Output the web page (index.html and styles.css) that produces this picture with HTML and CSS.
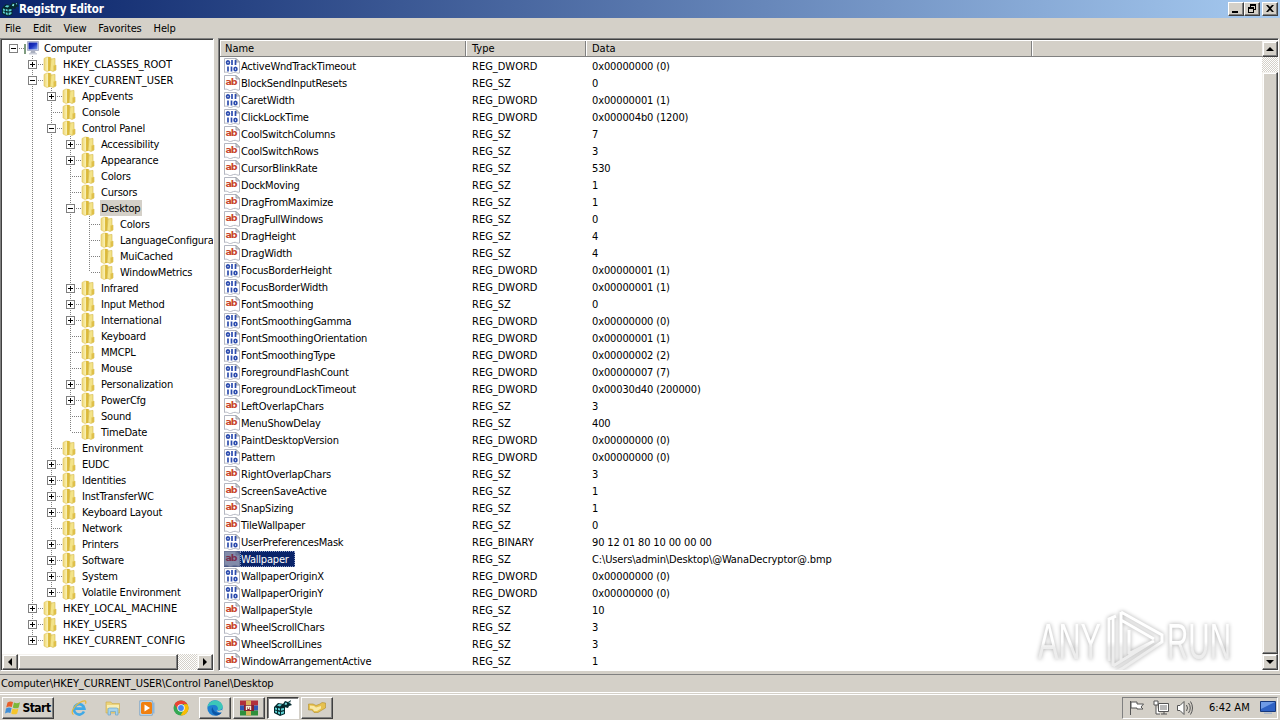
FILE: index.html
```
<!DOCTYPE html>
<html lang="en">

<head>
    <meta charset="UTF-8">
    <meta name="viewport" content="width=device-width, initial-scale=1.0">
    <title>Registry Editor</title>
    <link rel="stylesheet" href="styles.css">
</head>

<body>
    <svg class="defs" width="0" height="0">
        <defs>
            <linearGradient id="gold" x1="0" x2="1">
                <stop offset="0" stop-color="#ecd676" />
                <stop offset=".5" stop-color="#f9efb0" />
                <stop offset="1" stop-color="#dcb93c" />
            </linearGradient>
            <linearGradient id="screen" x1="0" x2="1" y2="1">
                <stop offset="0" stop-color="#0818a0" />
                <stop offset=".5" stop-color="#1c34c0" />
                <stop offset="1" stop-color="#7aa0f0" />
            </linearGradient>
            <linearGradient id="fade" x2="0" y2="1">
                <stop offset=".5" stop-color="#fff" />
                <stop offset=".6" stop-color="#ededed" />
            </linearGradient>
        </defs>
        <symbol id="i-folder" viewBox="0 0 16 16">
            <path fill="url(#gold)" stroke="#e0c558" stroke-width=".6" d="M2 2.500 5 1l4 .6V14l-4 1.500L2 14z" />
            <path fill="#d9b632" d="M6 1h2v14H6z" opacity=".85" />
            <path fill="#f3e389" stroke="#d4b748" stroke-width=".6" d="m9 3 4-.6v6l1 1V14l-3 1.500L8 14z" />
            <path fill="#dfc04a" d="M11.500 9.500 14 9v5l-2.500 1z" />
        </symbol>
        <symbol id="i-computer" viewBox="0 0 16 16">
            <path fill="#7f9c7f" d="M1 4h2v10H1z" />
            <path fill="#dfe3ee" stroke="#9aa2bd" stroke-width=".8" d="M4.500 1.500h11v9h-11z" />
            <path fill="url(#screen)" d="M5.500 2.500h9v7h-9z" />
            <path fill="#aab0bf" d="M8 11h4l1 3H7z" />
            <path fill="#c9cdd8" d="M6 13h8v1.500H6z" />
        </symbol>
        <symbol id="i-page" viewBox="0 0 16 16">
            <path fill="#fff" stroke="#b4b7c2" stroke-width="1" d="M.5.5h11.500l3.500 3.500v11c-2 1-3.500-1.500-6-.5s-3.500 1.500-5 .5-3-1-4-.5z" />
            <path fill="#dfe3e8" stroke="#8b9098" stroke-width=".8" d="M12 .5V4h3.500z" />
        </symbol>
        <symbol id="i-regedit" viewBox="0 0 18 16">
            <path fill="#04282c" d="m0 7 4-4 6 1 1 3v7l-5 2-6-3z" />
            <path fill="#5fd3d6" d="m1 7.500 2 .5v2l-2-.5zM4 8l2 .5v2L4 10zM1 10.500l2 .5v2l-2-.7zM4 11.500l2 .5v2.500L4 13.500zM7 8.500 10 8v2l-3 .7zM7 12l3-.8v2L7 14.500zM3 5.500 5 4l3 .6L6 6.500z" />
            <path fill="#062c30" d="m9 4 2-3 3 1 3-2-1 3 2 2-3 1-1 2-4-1z" />
            <path fill="#7fe4e6" d="m10.500 4.500 1-2 1.500.5-.5 2zM14.500 2.500 16 1.500l-.5 2z" />
        </symbol>
        <symbol id="i-win" viewBox="0 0 16 16">
            <path fill="#e8602c" d="M2.500 2.500C4.500 1 6.500 1.200 8 2L6.800 7C5 6.200 3 6.200 1.200 7.500z" />
            <path fill="#7cb83a" d="M9 2.500c2 1 4 1 6-.3L13.700 7.500C12 8.800 9.800 8.500 7.800 7.500z" />
            <path fill="#3f8fd8" d="M1 8.500c2-1.300 4-1.200 5.600-.4L5.400 13C3.600 12.200 2 12.300 0 13.500z" />
            <path fill="#f5c52c" d="M7.500 8.600c2 1 4 1 5.900-.2L12.200 13.500c-2 1.300-4 1-6 0z" />
        </symbol>
        <symbol id="i-ie" viewBox="0 0 16 16">
            <path fill="none" stroke="#41a9e6" stroke-width="2.600" d="M13 11.500A5.200 5.200 0 1 1 13.400 8.600H4" />
            <path fill="none" stroke="#e8b83a" stroke-width="1.200" d="M2.500 14.500C-1 13 3 6 8 3s8-3 6.500.8" />
        </symbol>
        <symbol id="i-explorer" viewBox="0 0 16 16">
            <path fill="#ecd37a" stroke="#c9a94a" stroke-width=".6" d="M1 2h5l1 1.500h7.500V13H1z" />
            <path fill="#f8eeb4" d="M2 5h12v3H2z" />
            <path fill="#a5d3ec" stroke="#6aa5cc" stroke-width=".7" d="M3 15V9.500q0-1.500 1.500-1.500h7Q13 8 13 9.500V15h-2.500v-3.500h-5V15z" />
        </symbol>
        <symbol id="i-player" viewBox="0 0 16 16">
            <path fill="#cfe4f5" stroke="#6f9dc8" stroke-width=".8" d="M.8.800h12.500v14.400H.8z" />
            <path fill="#8fb6da" d="M13.500 2.500h2v11h-2z" />
            <path fill="#f08010" d="M2 3.500Q2 2 3.500 2h8Q13 2 13 3.500v9q0 1.500-1.500 1.500h-8Q2 14 2 12.500z" />
            <path fill="#fff" d="m5.500 4.500 5.500 3.500-5.500 3.500z" />
        </symbol>
        <symbol id="i-chrome" viewBox="0 0 16 16">
            <circle cx="8" cy="8" r="7.500" fill="#34a853" />
            <path fill="#ea4335" d="M1.500 4.200A7.500 7.500 0 0 1 14.500 4.300H8L5 9.700z" />
            <path fill="#fbbc05" d="M14.500 4.300A7.500 7.500 0 0 1 7.500 15.500L11 9.800V4.300z" />
            <circle cx="8" cy="8" r="3.700" fill="#fff" />
            <circle cx="8" cy="8" r="2.900" fill="#4285f4" />
        </symbol>
        <symbol id="i-edge" viewBox="0 0 16 16">
            <circle cx="8" cy="8" r="7.700" fill="#1f7fd0" />
            <path fill="#3cc7b8" d="M.5 7C1.500 1.500 6 .2 9 .4c4 .3 7 3.600 6.700 6.600-.3 2.400-2.700 3.500-5.200 3 1-1.500.4-4.500-3-5C4.500 4.600 2 5.500.5 7z" />
            <path fill="#0d56a6" d="M5.500 7C3.500 10 5 14 9 15.500c2.500 0 4.500-1.200 5.700-3C11 14 6 12 5.500 7z" />
            <path fill="#d6d2ca" d="M9.600 10.300c1.500.8 4.500.5 6-1l-.7 2.700c-2 1-4.600.3-5.300-1.700z" />
        </symbol>
        <symbol id="i-rar" viewBox="0 0 18 16">
            <path fill="#b0303c" d="M0 .5h18v5H0z" />
            <path fill="#2f56b4" d="M0 5.500h18v5H0z" />
            <path fill="#2f8f3c" d="M0 10.500h18v5H0z" />
            <path fill="#d8b45a" d="M6 .5h5v15H6z" />
            <path fill="#842030" d="M4 5h10v6H4z" />
            <path fill="none" stroke="#f4eed8" stroke-width="1.400" d="M6.500 10V6.500h4V10M8.500 6v3" />
        </symbol>
        <symbol id="i-hand" viewBox="0 0 18 16">
            <path fill="#e6c14e" stroke="#b48f2c" stroke-width=".6" d="M.5 4 5 4l3 1.500L12 4l2-1.500 3.500.5v5L14 10l-4 2.500H6L4 10H.5z" />
            <path fill="#f8e9a8" d="m2 5.500 4 .5 2 1.500 5-1.500v2.500L9 11H6L5 9 2 8.500z" />
        </symbol>
    </svg>

    <div class="titlebar">
        <svg class="app-icon"><use href="#i-regedit" /></svg>
        <h1>Registry Editor</h1>
        <div class="window-buttons">
            <button><svg viewBox="0 0 14 12"><path d="M3 8h6v2H3z" /></svg></button>
            <button><svg viewBox="0 0 14 12"><path fill-rule="evenodd" d="M5 1h6v6H9V6h1V3H6v1H5zM3 4h6v6H3zm1 2v3h4V6z" /></svg></button>
            <button class="close"><svg viewBox="0 0 14 12"><path d="M3 2h2l2 2 2-2h2L8 5.500 11 9H9L7 7 5 9H3l3-3.500z" /></svg></button>
        </div>
    </div>

    <div class="menu">
        <span>File</span>
        <span>Edit</span>
        <span>View</span>
        <span>Favorites</span>
        <span>Help</span>
    </div>

    <div class="panes">
        <div class="tree-pane">
            <div class="tree" id="tree"></div>
            <div class="scrollbar horizontal">
                <div class="scroll-button"><svg viewBox="0 0 8 8"><path d="M6 0v8L2 4z" /></svg></div>
                <div class="thumb"></div>
                <div class="track"></div>
                <div class="scroll-button"><svg viewBox="0 0 8 8"><path d="M2 0v8l4-4z" /></svg></div>
            </div>
        </div>

        <div class="list-pane">
            <div class="list">
                <div class="list-header">
                    <div>Name</div>
                    <div>Type</div>
                    <div>Data</div>
                    <div></div>
                </div>
                <div id="values"></div>
            </div>
            <div class="scrollbar vertical">
                <div class="scroll-button"><svg viewBox="0 0 8 8"><path d="M0 6h8L4 2z" /></svg></div>
                <div class="track"></div>
                <div class="thumb"></div>
                <div class="scroll-button"><svg viewBox="0 0 8 8"><path d="M0 2h8L4 6z" /></svg></div>
            </div>
            <svg class="watermark" viewBox="0 0 210 75">
                <g class="mark">
                    <text x="8" y="59" textLength="63" lengthAdjust="spacingAndGlyphs">ANY</text>
                    <text x="137" y="59" textLength="64" lengthAdjust="spacingAndGlyphs">RUN</text>
                    <path d="M79 61V19l7-3M83 66V16M91 12v49M91 12l41 23v7L93 68l-6 3M91 20l33 19M99 30v24M98 54l26-13M83 66l39-24" />
                </g>
            </svg>
        </div>
    </div>

    <div class="status">Computer\HKEY_CURRENT_USER\Control Panel\Desktop</div>

    <div class="taskbar">
        <button class="start"><svg><use href="#i-win" /></svg>Start</button>
        <div class="quick">
            <svg><use href="#i-ie" /></svg>
            <svg><use href="#i-explorer" /></svg>
            <svg><use href="#i-player" /></svg>
            <svg><use href="#i-chrome" /></svg>
        </div>
        <div class="tasks">
            <button><svg><use href="#i-edge" /></svg></button>
            <button><svg><use href="#i-rar" /></svg></button>
            <button class="active"><svg><use href="#i-regedit" /></svg></button>
            <button><svg><use href="#i-hand" /></svg></button>
        </div>
        <div class="tray">
            <svg viewBox="0 0 16 16"><path d="M1.500 1v14M2 2h6v2h6.500l-2.500 3 2 2H8V8H2z" /></svg>
            <svg viewBox="0 0 16 16"><path d="M5.500 3.500h10v8h-10zM8 14h6M11 12v2M1 1v4h4V1M2 0v2M4 0v2M3 5v9h4" /><path class="grey" d="M7 5h7v5H7z" /></svg>
            <svg viewBox="0 0 16 16"><path d="M.5 5.500H3L7 1.500v13l-4-4H.5z" /><path class="waves" d="M9.500 5q2 3 0 6M11.500 3q3.500 5 0 10M13.500 1.500q4 6.500 0 13" /></svg>
            <span class="clock">6:42 AM</span>
            <svg class="desktop" viewBox="0 0 16 14"><path fill="#2f62c4" stroke="#16387c" d="M.5.5h15v10H.5z" /><path fill="#6f9be6" stroke="none" d="M1 1h14L1 8z" /><path fill="#a8b6cc" stroke="none" d="M4 11.500h8V13H4z" /></svg>
        </div>
    </div>

    <script>
        // [depth, name, state]  state: + closed, - open, empty = leaf
        const keys = [
            [0, 'Computer', '-'],
            [1, 'HKEY_CLASSES_ROOT', '+'],
            [1, 'HKEY_CURRENT_USER', '-'],
            [2, 'AppEvents', '+'],
            [2, 'Console', ''],
            [2, 'Control Panel', '-'],
            [3, 'Accessibility', '+'],
            [3, 'Appearance', '+'],
            [3, 'Colors', ''],
            [3, 'Cursors', ''],
            [3, 'Desktop', '-'],
            [4, 'Colors', ''],
            [4, 'LanguageConfiguration', ''],
            [4, 'MuiCached', ''],
            [4, 'WindowMetrics', ''],
            [3, 'Infrared', '+'],
            [3, 'Input Method', '+'],
            [3, 'International', '+'],
            [3, 'Keyboard', ''],
            [3, 'MMCPL', ''],
            [3, 'Mouse', ''],
            [3, 'Personalization', '+'],
            [3, 'PowerCfg', '+'],
            [3, 'Sound', ''],
            [3, 'TimeDate', ''],
            [2, 'Environment', ''],
            [2, 'EUDC', '+'],
            [2, 'Identities', '+'],
            [2, 'InstTransferWC', '+'],
            [2, 'Keyboard Layout', '+'],
            [2, 'Network', ''],
            [2, 'Printers', '+'],
            [2, 'Software', '+'],
            [2, 'System', '+'],
            [2, 'Volatile Environment', '+'],
            [1, 'HKEY_LOCAL_MACHINE', '+'],
            [1, 'HKEY_USERS', '+'],
            [1, 'HKEY_CURRENT_CONFIG', '+']
        ];

        const values = [
            ['ActiveWndTrackTimeout', 'REG_DWORD', '0x00000000 (0)'],
            ['BlockSendInputResets', 'REG_SZ', '0'],
            ['CaretWidth', 'REG_DWORD', '0x00000001 (1)'],
            ['ClickLockTime', 'REG_DWORD', '0x000004b0 (1200)'],
            ['CoolSwitchColumns', 'REG_SZ', '7'],
            ['CoolSwitchRows', 'REG_SZ', '3'],
            ['CursorBlinkRate', 'REG_SZ', '530'],
            ['DockMoving', 'REG_SZ', '1'],
            ['DragFromMaximize', 'REG_SZ', '1'],
            ['DragFullWindows', 'REG_SZ', '0'],
            ['DragHeight', 'REG_SZ', '4'],
            ['DragWidth', 'REG_SZ', '4'],
            ['FocusBorderHeight', 'REG_DWORD', '0x00000001 (1)'],
            ['FocusBorderWidth', 'REG_DWORD', '0x00000001 (1)'],
            ['FontSmoothing', 'REG_SZ', '0'],
            ['FontSmoothingGamma', 'REG_DWORD', '0x00000000 (0)'],
            ['FontSmoothingOrientation', 'REG_DWORD', '0x00000001 (1)'],
            ['FontSmoothingType', 'REG_DWORD', '0x00000002 (2)'],
            ['ForegroundFlashCount', 'REG_DWORD', '0x00000007 (7)'],
            ['ForegroundLockTimeout', 'REG_DWORD', '0x00030d40 (200000)'],
            ['LeftOverlapChars', 'REG_SZ', '3'],
            ['MenuShowDelay', 'REG_SZ', '400'],
            ['PaintDesktopVersion', 'REG_DWORD', '0x00000000 (0)'],
            ['Pattern', 'REG_DWORD', '0x00000000 (0)'],
            ['RightOverlapChars', 'REG_SZ', '3'],
            ['ScreenSaveActive', 'REG_SZ', '1'],
            ['SnapSizing', 'REG_SZ', '1'],
            ['TileWallpaper', 'REG_SZ', '0'],
            ['UserPreferencesMask', 'REG_BINARY', '90 12 01 80 10 00 00 00'],
            ['Wallpaper', 'REG_SZ', 'C:\\Users\\admin\\Desktop\\@WanaDecryptor@.bmp'],
            ['WallpaperOriginX', 'REG_DWORD', '0x00000000 (0)'],
            ['WallpaperOriginY', 'REG_DWORD', '0x00000000 (0)'],
            ['WallpaperStyle', 'REG_SZ', '10'],
            ['WheelScrollChars', 'REG_SZ', '3'],
            ['WheelScrollLines', 'REG_SZ', '3'],
            ['WindowArrangementActive', 'REG_SZ', '1']
        ];

        // true if another key at this depth follows under the same parent
        function hasNext(index, depth) {
            for (let i = index + 1; i < keys.length; i++) {
                if (keys[i][0] < depth) return false;
                if (keys[i][0] === depth) return true;
            }
            return false;
        }

        document.getElementById('tree').innerHTML = keys.map(([depth, name, state], index) => {
            let guides = '';
            for (let d = 0; d <= depth; d++) {
                const line = d > 0 && hasNext(index, d) ? ' line' : '';
                const elbow = d === depth ? ' elbow' : '';
                const top = d === depth && d > 0 ? ' top' : '';
                const box = d === depth && state ? `<i class="box ${state === '+' ? 'plus' : ''}"></i>` : '';
                guides += `<span class="guide${line}${elbow}${top}">${box}</span>`;
            }
            const icon = depth === 0 ? 'i-computer' : 'i-folder';
            const hive = depth === 1 ? ' hive' : '';
            const selected = name === 'Desktop' ? ' selected' : '';
            return `<div class="key">${guides}<svg><use href="#${icon}" /></svg><span class="key-name${hive}${selected}">${name}</span></div>`;
        }).join('');

        document.getElementById('values').innerHTML = values.map(([name, type, data]) => {
            const icon = type === 'REG_SZ'
                ? '<text class="ab" x="1.500" y="9.500" textLength="12">ab</text>'
                : '<g class="bits"><ellipse cx="4" cy="4.500" rx="1.400" ry="1.700" /><path d="M8 2v5M11.500 2v5M4 8.500v5M7.500 8.500v5" /><ellipse cx="11.500" cy="11" rx="1.400" ry="1.700" /></g>';
            const selected = name === 'Wallpaper' ? ' selected' : '';
            return `<div class="value${selected}">
                <div class="name"><svg viewBox="0 0 16 16"><use href="#i-page" />${icon}</svg><span>${name}</span></div>
                <div class="type">${type}</div>
                <div class="data">${data}</div>
            </div>`;
        }).join('');
    </script>
</body>

</html>
```
FILE: styles.css
```
* {
    margin: 0;
    padding: 0;
    box-sizing: border-box;
}

body {
    width: 1280px;
    height: 720px;
    overflow: hidden;
    display: flex;
    flex-direction: column;
    background: #d4d0c8;
    color: #000;
    font-family: Tahoma, 'DejaVu Sans Condensed', 'DejaVu Sans', sans-serif;
    font-size: 11px;
    letter-spacing: -0.2px;
    white-space: nowrap;
}

svg {
    display: block;
    flex: none;
}

.defs {
    position: absolute;
}

button {
    background: #d4d0c8;
    border: 1px solid;
    border-color: #fff #404040 #404040 #fff;
    box-shadow: inset -1px -1px #808080;
    font: inherit;
    color: #000;
}

.titlebar {
    height: 18px;
    flex: none;
    display: flex;
    align-items: center;
    padding: 0 2px;
    background: linear-gradient(to right, #0a246a, #a6caf0);
    color: #fff;
}

.app-icon {
    width: 17px;
    height: 16px;
}

.titlebar h1 {
    flex: 1;
    font-size: 11.5px;
    letter-spacing: -0.2px;
}

.window-buttons {
    display: flex;
}

.window-buttons button {
    width: 16px;
    height: 14px;
}

.window-buttons svg {
    width: 14px;
    height: 12px;
}

.window-buttons .close {
    margin-left: 2px;
}

.menu {
    height: 20px;
    flex: none;
    display: flex;
    align-items: center;
    gap: 12px;
    padding-left: 5px;
    letter-spacing: -0.15px;
}

.panes {
    height: 633px;
    flex: none;
    display: flex;
    gap: 4px;
}

.tree-pane,
.list-pane {
    background: #fff;
    border: 1px solid;
    border-color: #808080 #fff #fff #808080;
    box-shadow: inset 1px 1px #404040;
    padding: 2px 0 0 1px;
    overflow: hidden;
    display: flex;
}

.tree-pane {
    width: 214px;
    flex-direction: column;
    padding-top: 1px;
}

.tree {
    flex: 1;
    overflow: hidden;
    padding-left: 2px;
}

.key {
    height: 16px;
    display: flex;
}

.key svg {
    width: 16px;
    height: 16px;
    margin-right: 4px;
}

.guide {
    width: 19px;
    height: 16px;
    flex: none;
    position: relative;
}

.guide.line::before,
.guide.top::before {
    content: '';
    position: absolute;
    left: 9px;
    top: 0;
    width: 1px;
    height: 8px;
    background: repeating-linear-gradient(#808080 0 1px, transparent 1px 2px);
}

.guide.line::before {
    height: 16px;
}

.guide.elbow::after {
    content: '';
    position: absolute;
    left: 10px;
    top: 8px;
    width: 10px;
    height: 1px;
    background: repeating-linear-gradient(to right, transparent 0 1px, #808080 1px 2px);
}

.box {
    position: absolute;
    z-index: 1;
    left: 5px;
    top: 4px;
    width: 9px;
    height: 9px;
    border: 1px solid #808080;
    background: linear-gradient(#000, #000) center / 5px 1px no-repeat #fff;
}

.box.plus {
    background: linear-gradient(#000, #000) center / 5px 1px no-repeat,
        linear-gradient(#000, #000) center / 1px 5px no-repeat #fff;
}

.key-name {
    line-height: 15px;
    padding: 1px 2px 0 1px;
}

.key-name.hive {
    letter-spacing: 0;
}

.key-name.selected {
    background: #d4d0c8;
}

.list-pane {
    flex: 1;
    position: relative;
    margin-right: 1px;
}

.list {
    flex: 1;
}

.list-header,
.value {
    display: grid;
    grid-template-columns: 246px 120px 446px 1fr;
}

.list-header {
    height: 16px;
    margin-bottom: 1px;
    line-height: 14px;
    background: #d4d0c8;
    letter-spacing: 0;
}

.list-header div {
    height: 16px;
    padding: 1px 0 0 6px;
    border-right: 1px solid #808080;
    border-bottom: 1px solid #808080;
    box-shadow: inset 1px 0 #fff;
}

.list-header div:first-child {
    padding-left: 5px;
}

.list-header div:last-child {
    border-right: 0;
}

.value {
    height: 17px;
    line-height: 17px;
}

.value > div {
    padding-left: 6px;
}

.value .name {
    display: flex;
    align-items: flex-start;
    padding-left: 4px;
}

.value .type {
    letter-spacing: 0;
}

.value .data {
    letter-spacing: -0.13px;
}

.name svg {
    width: 16px;
    height: 16px;
}

.name span {
    line-height: 15px;
    padding: 1px 6px 0 1px;
}

.ab {
    font-family: 'DejaVu Sans', sans-serif;
    font-weight: bold;
    font-size: 9.5px;
    line-height: 10px;
    letter-spacing: 0;
    fill: #c8452c;
}

.bits {
    fill: none;
    stroke: #2c4cae;
    stroke-width: 1.7;
}

.selected .name span {
    background: #0a246a;
    color: #fff;
    outline: 1px dotted #8c9ac4;
    outline-offset: -1px;
}

.selected .name svg {
    background: #4c5a86;
}

.selected .name use {
    opacity: 0.3;
}

.selected .ab {
    fill: #7a2c4c;
}

.scrollbar {
    display: flex;
    flex: none;
    background: #d4d0c8;
}

.scrollbar.horizontal {
    height: 16px;
}

.scrollbar.vertical {
    width: 16px;
    flex-direction: column;
}

.scroll-button,
.thumb {
    background: #d4d0c8;
    border: 1px solid;
    border-color: #f4f2ee #404040 #404040 #f4f2ee;
    box-shadow: inset -1px -1px #808080, inset 1px 1px #fff;
}

.scroll-button {
    width: 16px;
    height: 16px;
    flex: none;
    display: flex;
    align-items: center;
    justify-content: center;
}

.scroll-button svg {
    width: 8px;
    height: 8px;
}

.track {
    flex: 1;
    background: repeating-conic-gradient(#fff 0 25%, #d4d0c8 0 50%) 0 0 / 2px 2px;
}

.horizontal .thumb {
    width: 160px;
}

.vertical .thumb {
    height: 582px;
}

.watermark {
    position: absolute;
    left: 811px;
    top: 561px;
    width: 210px;
    height: 75px;
    overflow: visible;
}

.mark {
    filter: drop-shadow(0 0 2px #aaa);
    fill: none;
    stroke: url(#fade);
    stroke-width: 3;
}

.mark text {
    font-family: 'Liberation Sans', sans-serif;
    font-size: 50px;
    letter-spacing: 0;
    fill: url(#fade);
    stroke: none;
}

.status {
    height: 19px;
    flex: none;
    margin-top: 3px;
    padding-left: 1px;
    line-height: 17px;
    letter-spacing: -0.07px;
    border-top: 1px solid #808080;
    border-bottom: 1px solid #fff;
}

.taskbar {
    flex: 1;
    display: flex;
    align-items: center;
    border-top: 1px solid #fff;
    margin-top: 1px;
    padding: 0 2px;
}

.taskbar button {
    height: 22px;
    display: flex;
    align-items: center;
    justify-content: center;
}

.taskbar .start {
    width: 52px;
    gap: 1px;
    font-weight: bold;
    font-size: 12px;
    letter-spacing: -0.5px;
}

.start svg,
.quick svg,
.tray svg {
    width: 16px;
    height: 16px;
}

.quick {
    display: flex;
    gap: 18px;
    margin-left: 17px;
}

.tasks {
    flex: 1;
    display: flex;
    gap: 2px;
    margin-left: 10px;
}

.tasks button {
    width: 32px;
}

.tasks svg {
    width: 18px;
    height: 16px;
}

.tasks .active {
    background: #fff;
    border-color: #404040 #fff #fff #404040;
    box-shadow: inset 1px 1px #808080;
}

.tray {
    width: 156px;
    height: 22px;
    display: flex;
    align-items: center;
    padding-left: 6px;
    gap: 8px;
    border: 1px solid;
    border-color: #808080 #fff #fff #808080;
}

.tray svg {
    fill: #fff;
    stroke: #555;
}

.tray .grey {
    fill: #b8b8b8;
    stroke: none;
}

.tray .waves {
    fill: none;
}

.clock {
    width: 43px;
    margin-left: 8px;
    letter-spacing: 0;
}

.tray .desktop {
    height: 14px;
}
```
